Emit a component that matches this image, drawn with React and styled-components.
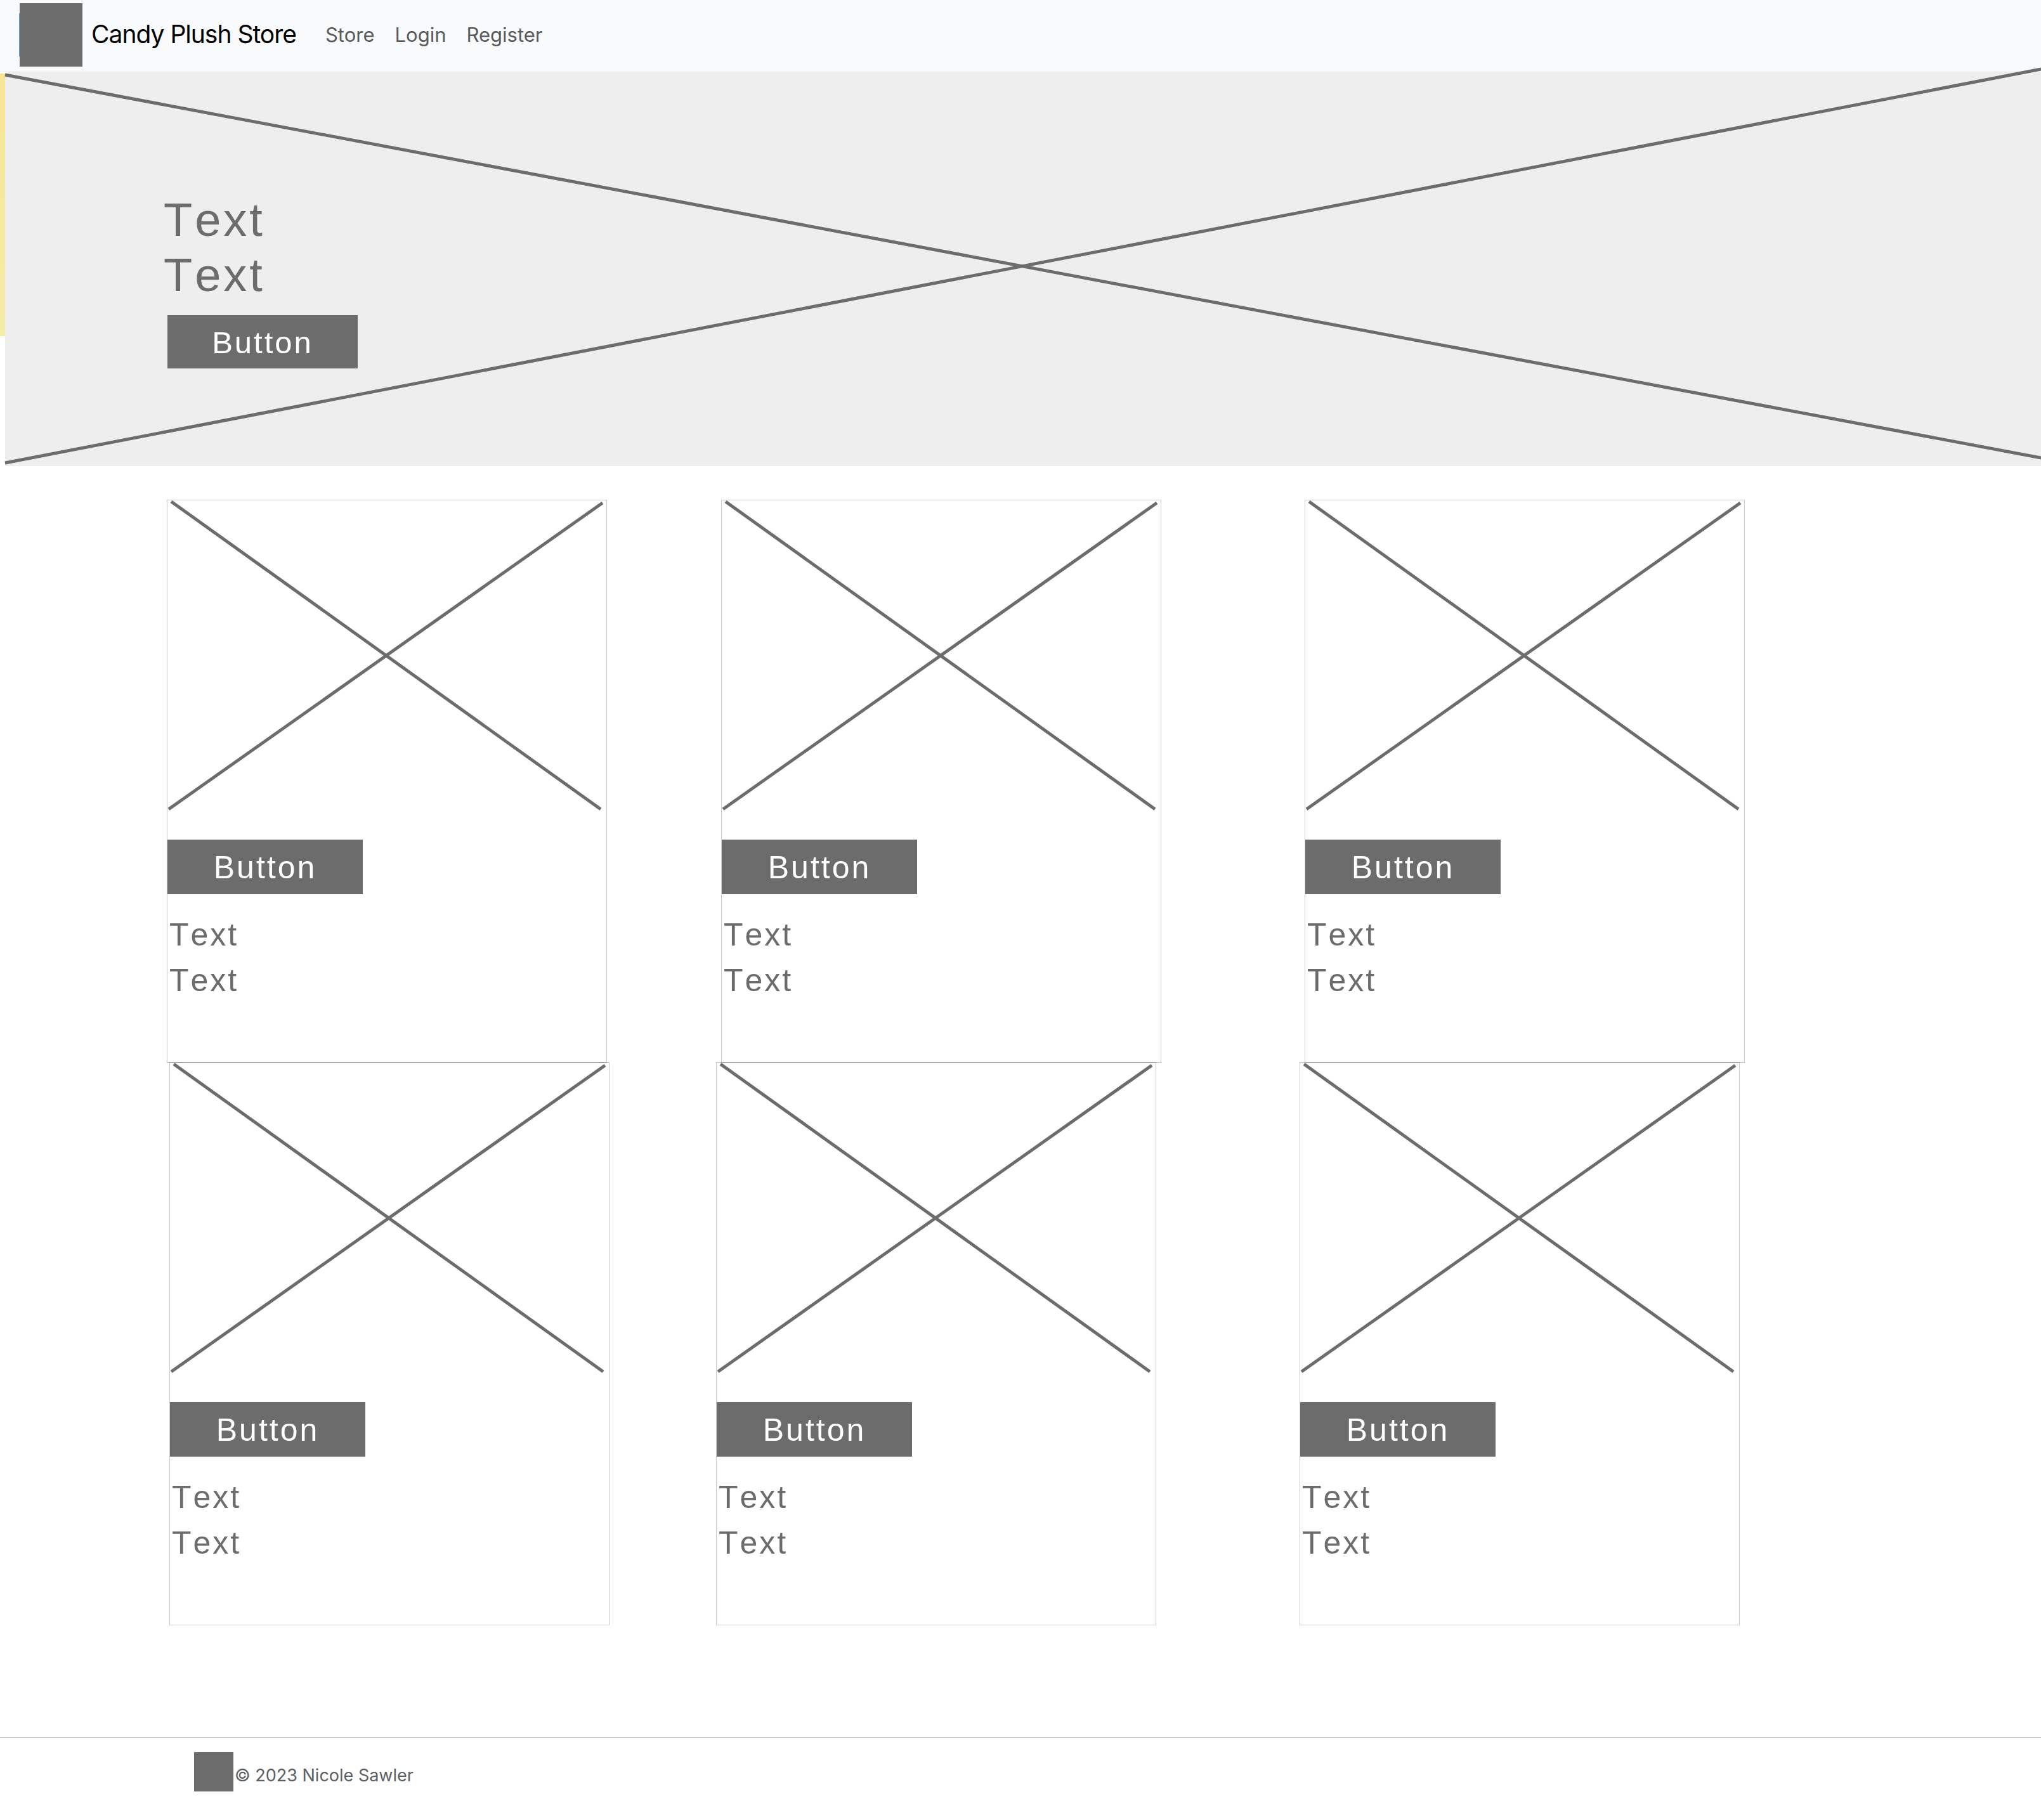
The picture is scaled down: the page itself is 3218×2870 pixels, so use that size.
import React from "react";
import styled, { createGlobalStyle } from "styled-components";

const INK = "#6c6c6c";
const UI_FONT = 'Inter, "Liberation Sans", sans-serif';
const SKETCH_FONT = '"Liberation Sans", Arial, sans-serif';

const GlobalStyle = createGlobalStyle`
  *, *::before, *::after { box-sizing: border-box; }
  body { margin: 0; background: #ffffff; font-family: ${UI_FONT}; }
`;

const Page = styled.div`
  display: flex;
  flex-direction: column;
`;

const Header = styled.header`
  display: flex;
  align-items: center;
  gap: 46px;
  padding: 5px 30px 7px;
  background: #f8fafc;
  border-bottom: 1px solid #fdeef1;
`;

const Brand = styled.a`
  display: flex;
  align-items: center;
  gap: 14px;
  color: #000000;
  font-size: 39px;
  line-height: 56px;
  letter-spacing: -1px;
  text-decoration: none;
`;

const BrandMark = styled.span`
  width: 100px;
  height: 100px;
  padding-left: 1px;
  background:
    linear-gradient(${INK}, ${INK}) content-box,
    linear-gradient(#5fa8e0, #5fa8e0) no-repeat left center / 1px 68px;
`;

const Nav = styled.nav`
  display: flex;
  gap: 32px;
`;

const NavLink = styled.a`
  color: #595a5b;
  font-size: 31px;
  line-height: 48px;
  text-decoration: none;
`;

const HeaderText = styled.span`
  padding-bottom: 2px;
`;

const Hero = styled.section`
  display: flex;
  background: linear-gradient(#f6e694, #f5eca8) no-repeat left 3px / 8px 414px;
`;

const HeroPanel = styled.div`
  position: relative;
  flex: 1;
  min-height: 622px;
  margin-left: 8px;
  padding: 190px 250px 154px;
  background: #eeeeee;
`;

const HeroCross = styled.svg`
  position: absolute;
  inset: 0;
  width: 100%;
  height: 100%;
  overflow: visible;
`;

const HeroContent = styled.div`
  position: relative;
  display: flex;
  flex-direction: column;
  align-items: flex-start;
`;

const HeroLine = styled.p`
  margin: 0;
  color: ${INK};
  font-family: ${SKETCH_FONT};
  font-size: 74px;
  font-kerning: none;
  line-height: 87px;
  letter-spacing: 4px;
`;

const Button = styled.button`
  width: ${(p) => (p.$large ? 308 : 300)}px;
  height: ${(p) => (p.$large ? 86 : 84)}px;
  padding: 2px 0 0;
  border: 0;
  background: ${INK};
  color: #ffffff;
  font-family: ${SKETCH_FONT};
  font-size: ${(p) => (p.$large ? 50 : 49)}px;
  letter-spacing: 3px;
`;

const HeroButton = styled(Button)`
  margin: 20px 0 0 6px;
`;

const Products = styled.main`
  padding: 53px 0 176px;
`;

const Row = styled.div`
  display: grid;
  grid-template-columns: ${(p) => p.$columns};

  & + & { margin-top: -1px; }
`;

const Card = styled.article`
  display: flex;
  flex-direction: column;
  align-items: flex-start;
  padding-bottom: 93px;
  border: 1px solid rgba(0, 0, 0, 0.2);

  &:nth-child(1) { grid-column: 2; }
  &:nth-child(2) { grid-column: 4; }
  &:nth-child(3) { grid-column: 6; }
`;

const CardCross = styled.svg`
  display: block;
  width: 100%;
  height: auto;
  margin-bottom: 45px;
`;

const CardText = styled.div`
  padding: 28px 3px 0;
`;

const CardLine = styled.p`
  margin: 0;
  color: ${INK};
  font-family: ${SKETCH_FONT};
  font-size: 50px;
  font-kerning: none;
  line-height: 72px;
  letter-spacing: 3px;
`;

const Footer = styled.footer`
  display: flex;
  align-items: center;
  gap: 2px;
  padding: 22px 306px 45px;
  border-top: 2px solid #c8c8c8;
`;

const FooterMark = styled.span`
  width: 62px;
  height: 62px;
  background: ${INK};
`;

const Copyright = styled.small`
  padding-top: 12px;
  color: #5b5f63;
  font-size: 27px;
  line-height: 42px;
`;

const links = ["Store", "Login", "Register"];

const rows = [
  { id: "first", columns: "263fr 694fr 180fr 694fr 226fr 694fr 467fr" },
  { id: "second", columns: "267fr 694fr 168fr 694fr 226fr 694fr 475fr" },
];

function ProductCard() {
  return (
    <Card>
      <CardCross viewBox="0 0 692 490" stroke={INK} strokeWidth="5" aria-hidden="true">
        <line x1="6" y1="2" x2="683" y2="487" />
        <line x1="2" y1="487" x2="686" y2="4" />
      </CardCross>
      <Button type="button" $large>Button</Button>
      <CardText>
        <CardLine>Text</CardLine>
        <CardLine>Text</CardLine>
      </CardText>
    </Card>
  );
}

export default function App() {
  return (
    <Page>
      <GlobalStyle />
      <Header>
        <Brand href="#">
          <BrandMark />
          <HeaderText>Candy Plush Store</HeaderText>
        </Brand>
        <Nav>
          {links.map((label) => (
            <NavLink key={label} href="#">
              <HeaderText>{label}</HeaderText>
            </NavLink>
          ))}
        </Nav>
      </Header>
      <Hero>
        <HeroPanel>
          <HeroCross viewBox="0 0 3210 622" preserveAspectRatio="none" stroke={INK} strokeWidth="5" aria-hidden="true">
            <line x1="0" y1="5" x2="3210" y2="609" />
            <line x1="0" y1="617" x2="3210" y2="-4" />
          </HeroCross>
          <HeroContent>
            <HeroLine>Text</HeroLine>
            <HeroLine>Text</HeroLine>
            <HeroButton type="button">Button</HeroButton>
          </HeroContent>
        </HeroPanel>
      </Hero>
      <Products>
        {rows.map((row) => (
          <Row key={row.id} $columns={row.columns}>
            <ProductCard />
            <ProductCard />
            <ProductCard />
          </Row>
        ))}
      </Products>
      <Footer>
        <FooterMark />
        <Copyright>© 2023 Nicole Sawler</Copyright>
      </Footer>
    </Page>
  );
}
